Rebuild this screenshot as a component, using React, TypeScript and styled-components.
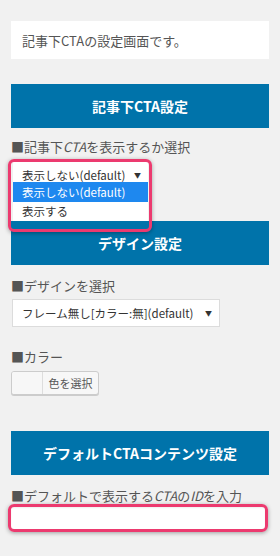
import React from 'react'
import styled, { createGlobalStyle } from 'styled-components'

const GlobalStyle = createGlobalStyle`
  html, body {
    margin: 0;
    padding: 0;
    background: #f1f1f1;
  }
  body {
    font-family: "Noto Sans CJK JP", "Noto Sans", sans-serif;
    color: #555;
  }
`

const Page = styled.div`
  width: 280px;
  height: 556px;
  box-sizing: border-box;
  padding: 21px 11px 0;
  display: flex;
  flex-direction: column;
  overflow: hidden;
`

const Intro = styled.div`
  height: 38px;
  background: #fff;
  display: flex;
  align-items: center;
  padding: 0 11px;
  font-size: 13px;
  color: #555;
`

const SectionHeader = styled.div<{ $top: number }>`
  margin-top: ${({ $top }) => $top}px;
  height: 44px;
  flex-shrink: 0;
  background: #0073aa;
  color: #fff;
  font-weight: 700;
  font-size: 14px;
  display: flex;
  align-items: center;
  justify-content: center;
  position: relative;
  z-index: 0;
`

const Label = styled.div<{ $top: number }>`
  margin-top: ${({ $top }) => $top}px;
  font-size: 13px;
  line-height: 16px;
  color: #555;
  white-space: nowrap;

  i {
    font-style: italic;
  }
`

// annotation frame drawn over a field
const Highlight = styled.div`
  position: relative;
`

const Frame = styled.div<{ $l: number; $t: number; $w: number; $h: number }>`
  position: absolute;
  left: ${({ $l }) => $l}px;
  top: ${({ $t }) => $t}px;
  width: ${({ $w }) => $w}px;
  height: ${({ $h }) => $h}px;
  box-sizing: border-box;
  border: 3px solid #ec3a6f;
  border-radius: 6px;
  box-shadow: 0 1px 4px rgba(0, 0, 0, 0.35);
  pointer-events: none;
  z-index: 3;
`

const SelectBox = styled.div<{ $top: number; $left: number; $width: number; $height: number; $bordered?: boolean }>`
  margin-top: ${({ $top }) => $top}px;
  margin-left: ${({ $left }) => $left}px;
  width: ${({ $width }) => $width}px;
  height: ${({ $height }) => $height}px;
  box-sizing: border-box;
  background: #fff;
  border: ${({ $bordered }) => ($bordered ? '1px solid #dcdcdc' : 'none')};
  display: flex;
  align-items: center;
  justify-content: space-between;
  padding: 0 7px 0 9px;
  font-size: 11.5px;
  color: #333;
  white-space: nowrap;
`

const Arrow = styled.span`
  font-size: 7px;
  color: #333;
`

const OptionList = styled.div`
  position: absolute;
  left: 2px;
  top: 27px;
  width: 135px;
  background: #fff;
  z-index: 2;
`

const Option = styled.div<{ $active?: boolean }>`
  height: 19.5px;
  display: flex;
  align-items: center;
  padding-left: 9px;
  font-size: 11.5px;
  background: ${({ $active }) => ($active ? '#1e88ef' : '#fff')};
  color: ${({ $active }) => ($active ? '#fff' : '#333')};
`

const ColorButton = styled.div`
  margin-top: 6px;
  width: 88px;
  height: 24px;
  box-sizing: border-box;
  display: flex;
  border: 1px solid #ccc;
  border-radius: 3px;
  background: #f7f7f7;
  box-shadow: 0 1px 0 #ccc;
  overflow: hidden;
`

const Swatch = styled.span`
  width: 30px;
  border-right: 1px solid #ddd;
  background: #f7f7f7;
`

const ColorText = styled.span`
  flex: 1;
  display: flex;
  align-items: center;
  justify-content: center;
  font-size: 11px;
  color: #555;
`

const TextInput = styled.div`
  margin-top: 3px;
  width: 254px;
  height: 22px;
  background: #fff;
  box-shadow: inset 0 1px 2px rgba(0, 0, 0, 0.07);
`

export default function App() {
  return (
    <>
      <GlobalStyle />
      <Page>
        <Intro>記事下CTAの設定画面です。</Intro>

        <SectionHeader $top={25}>記事下CTA設定</SectionHeader>
        <Label $top={11}>
          ■記事下<i>CTA</i>を表示するか選択
        </Label>
        <Highlight>
          <SelectBox $top={7} $left={2} $width={135} $height={26}>
            表示しない(default)
            <Arrow>▼</Arrow>
          </SelectBox>
          <OptionList>
            <Option $active>表示しない(default)</Option>
            <Option>表示する</Option>
          </OptionList>
          <Frame $l={-3} $t={4} $w={144} $h={73} />
        </Highlight>

        <SectionHeader $top={33}>デザイン設定</SectionHeader>
        <Label $top={13}>■デザインを選択</Label>
        <SelectBox $top={5} $left={1} $width={208} $height={28} $bordered>
          フレーム無し[カラー:無](default)
          <Arrow>▼</Arrow>
        </SelectBox>
        <Label $top={22}>■カラー</Label>
        <ColorButton>
          <Swatch />
          <ColorText>色を選択</ColorText>
        </ColorButton>

        <SectionHeader $top={36}>デフォルトCTAコンテンツ設定</SectionHeader>
        <Label $top={13}>
          ■デフォルトで表示する<i>CTA</i>の<i>ID</i>を入力
        </Label>
        <Highlight>
          <TextInput />
          <Frame $l={-3} $t={0} $w={260} $h={28} />
        </Highlight>
      </Page>
    </>
  )
}
